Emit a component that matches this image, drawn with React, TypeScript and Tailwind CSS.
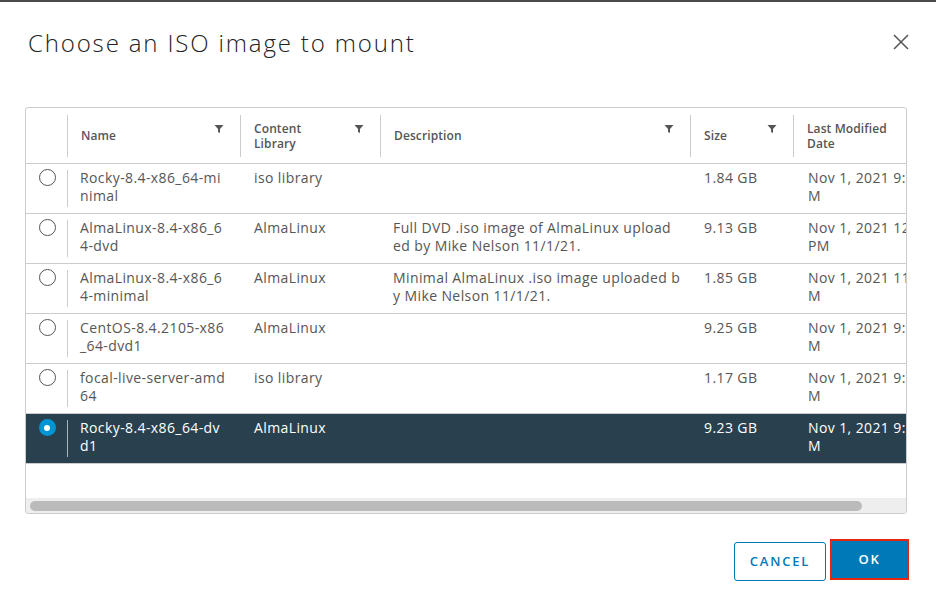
import React from "react";

const rows = [
  { name: ["Rocky-8.4-x86_64-mi", "nimal"], lib: "iso library", desc: ["", ""], size: "1.84 GB", date: ["Nov 1, 2021 9:45 A", "M"] },
  { name: ["AlmaLinux-8.4-x86_6", "4-dvd"], lib: "AlmaLinux", desc: ["Full DVD .iso image of AlmaLinux upload", "ed by Mike Nelson 11/1/21."], size: "9.13 GB", date: ["Nov 1, 2021 12:10", "PM"] },
  { name: ["AlmaLinux-8.4-x86_6", "4-minimal"], lib: "AlmaLinux", desc: ["Minimal AlmaLinux .iso image uploaded b", "y Mike Nelson 11/1/21."], size: "1.85 GB", date: ["Nov 1, 2021 11:55 A", "M"] },
  { name: ["CentOS-8.4.2105-x86", "_64-dvd1"], lib: "AlmaLinux", desc: ["", ""], size: "9.25 GB", date: ["Nov 1, 2021 9:00 A", "M"] },
  { name: ["focal-live-server-amd", "64"], lib: "iso library", desc: ["", ""], size: "1.17 GB", date: ["Nov 1, 2021 9:45 A", "M"] },
  { name: ["Rocky-8.4-x86_64-dv", "d1"], lib: "AlmaLinux", desc: ["", ""], size: "9.23 GB", date: ["Nov 1, 2021 9:00 A", "M"], selected: true },
];

function Filter() {
  return (
    <svg width="10" height="10" viewBox="0 0 10 10" className="shrink-0">
      <path d="M0.5 1 H9.5 L6 5 V9 L4 8 V5 Z" fill="#555" />
    </svg>
  );
}

function HeaderCell({ w, children, last }: { w: string; children: React.ReactNode; last?: boolean }) {
  return (
    <div className={`${w} flex h-full items-center shrink-0`}>
      <div className="h-[42px] w-px bg-[#ccc] shrink-0" />
      <div className="flex flex-1 items-center justify-between pl-[13px] pr-[16px] text-[12px] font-semibold leading-[15px] text-[#565656] tracking-[0.1px]">
        <div>{children}</div>
        {!last && <div className="mt-[-14px]"><Filter /></div>}
      </div>
    </div>
  );
}

export default function App() {
  return (
    <div className="w-[936px] h-[606px] bg-white relative overflow-hidden" style={{ fontFamily: "'Open Sans', 'Noto Sans', sans-serif" }}>
      <div className="h-[2px] bg-[#4a4a4a]" />
      <div className="flex items-start justify-between pl-[28px] pr-[26px] pt-[25px]">
        <div className="text-[24px] font-light leading-[32px] text-[#222] tracking-[1.85px]">Choose an ISO image to mount</div>
        <svg width="18" height="18" viewBox="0 0 18 18" className="mt-[6px]">
          <path d="M2 2 L16 16 M16 2 L2 16" stroke="#555" strokeWidth="1.5" />
        </svg>
      </div>

      <div className="mx-[25px] mt-[48px] h-[407px] w-[882px] overflow-hidden rounded-[3px] border border-[#ccc] flex flex-col">
        <div className="w-[1000px] flex h-[56px] border-b border-[#ccc] shrink-0">
          <div className="w-[41px] shrink-0" />
          <HeaderCell w="w-[173px]">Name</HeaderCell>
          <HeaderCell w="w-[140px]">Content<br />Library</HeaderCell>
          <HeaderCell w="w-[310px]">Description</HeaderCell>
          <HeaderCell w="w-[103px]">Size</HeaderCell>
          <HeaderCell w="w-[200px]" last>Last Modified<br />Date</HeaderCell>
        </div>
        {rows.map((r, i) => (
          <div
            key={i}
            className={`w-[1000px] flex h-[50px] shrink-0 border-b border-[#ccc] text-[14px] leading-[18px] tracking-[0.4px] ${r.selected ? "bg-[#29414e] text-white" : "text-[#565656]"}`}
          >
            <div className="w-[41px] shrink-0 flex justify-center pt-[5px] pl-[1px]">
              {r.selected ? (
                <div className="w-[17px] h-[17px] rounded-full bg-[#0095d3] flex items-center justify-center">
                  <div className="w-[6px] h-[6px] rounded-full bg-white" />
                </div>
              ) : (
                <div className="w-[17px] h-[17px] rounded-full border border-[#555] bg-white" />
              )}
            </div>
            <div className="w-[173px] shrink-0 flex">
              <div className={`w-px my-[6px] shrink-0 ${r.selected ? "bg-[#aab3b8]" : "bg-[#ccc]"}`} />
              <div className="pl-[12px] pt-[5px] whitespace-nowrap">{r.name[0]}<br />{r.name[1]}</div>
            </div>
            <div className="w-[140px] shrink-0 pl-[14px] pt-[5px] whitespace-nowrap">{r.lib}</div>
            <div className="w-[310px] shrink-0 pl-[13px] pt-[5px] whitespace-nowrap">{r.desc[0]}<br />{r.desc[1]}</div>
            <div className="w-[103px] shrink-0 pl-[14px] pt-[5px] whitespace-nowrap">{r.size}</div>
            <div className="w-[200px] shrink-0 pl-[15px] pt-[5px] whitespace-nowrap">{r.date[0]}<br />{r.date[1]}</div>
          </div>
        ))}
        <div className="flex-1" />
        <div className="h-[15px] bg-[#eee] shrink-0 pt-[3px] pl-[4px]">
          <div className="h-[10px] w-[832px] rounded-full bg-[#bbb]" />
        </div>
      </div>

      <div className="flex justify-end gap-[4px] pr-[27px] mt-[25px]">
        <button className="w-[92px] h-[39px] mt-[3px] rounded-[3px] border border-[#0079b8] text-[#0079b8] text-[13px] font-semibold tracking-[0.14em] bg-white">
          CANCEL
        </button>
        <button className="w-[79px] h-[41px] border-2 border-[#e8260e] bg-[#0079b8] text-white text-[13px] font-semibold tracking-[0.14em]">
          OK
        </button>
      </div>
    </div>
  );
}
